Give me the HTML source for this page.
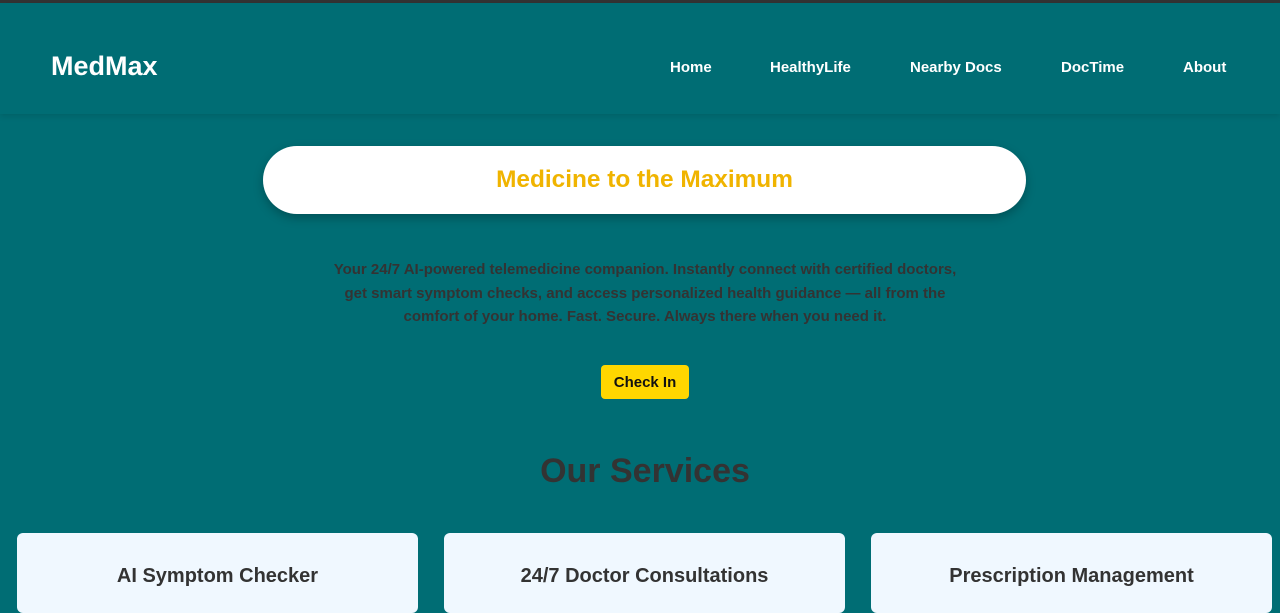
<!DOCTYPE html>
<html><head><meta charset="utf-8"><style>
*{margin:0;padding:0;box-sizing:border-box}
body{width:1280px;height:586px;overflow:hidden;background:#006d74;font-family:"Liberation Sans",Arial,sans-serif;border-top:3px solid #333;}
header{height:111px;background:#006d74;box-shadow:0 2px 6px rgba(0,0,0,.12);position:relative}
.logo{position:absolute;left:51px;top:48px;color:#fff;font-weight:bold;font-size:27px}
nav a{position:absolute;top:56px;color:#fff;font-weight:bold;font-size:15px;text-decoration:none}
.pill{position:absolute;left:263px;top:146px;width:763px;height:68px;background:#fff;border-radius:34px;box-shadow:0 4px 10px rgba(0,0,0,.25);text-align:center;line-height:68px;color:#f0b400;font-weight:bold;font-size:24.4px}
.desc{position:absolute;left:332px;top:258px;width:626px;text-align:center;color:#333;font-weight:bold;font-size:15px;line-height:23.5px}
.btn{position:absolute;left:601px;top:365px;width:88px;height:34px;background:#ffd700;border-radius:4px;text-align:center;line-height:35px;font-weight:bold;font-size:15px;color:#111}
h2{position:absolute;left:0;width:1290px;top:452px;text-align:center;color:#333;font-size:34px}
.card{position:absolute;top:533px;width:401px;height:80px;background:#f0f8ff;border-radius:6px;text-align:center;padding-top:32px;font-weight:bold;font-size:20px;color:#333}
</style></head><body>
<header><div class="logo">MedMax</div>
<nav><a style="left:670px">Home</a><a style="left:770px">HealthyLife</a><a style="left:910px">Nearby Docs</a><a style="left:1061px">DocTime</a><a style="left:1183px">About</a></nav></header>
<div class="pill">Medicine to the Maximum</div>
<div class="desc">Your 24/7 AI-powered telemedicine companion. Instantly connect with certified doctors, get smart symptom checks, and access personalized health guidance — all from the comfort of your home. Fast. Secure. Always there when you need it.</div>
<div class="btn">Check In</div>
<h2>Our Services</h2>
<div class="card" style="left:17px">AI Symptom Checker</div>
<div class="card" style="left:444px">24/7 Doctor Consultations</div>
<div class="card" style="left:871px">Prescription Management</div>
</body></html>
